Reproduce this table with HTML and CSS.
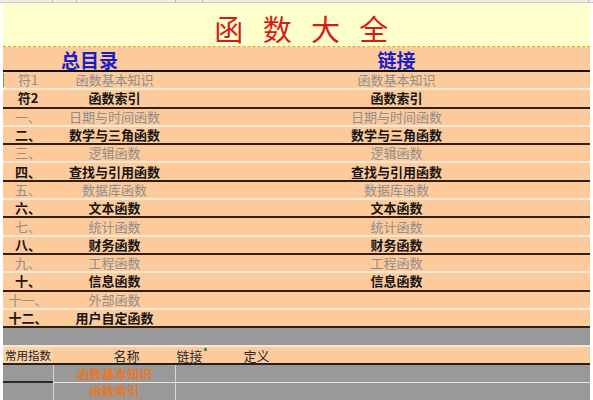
FILE: index.html
```
<!DOCTYPE html>
<html lang="zh">
<head>
<meta charset="utf-8">
<title>函数大全</title>
<link rel="stylesheet" href="styles.css">
</head>
<body>
<div class="colhead">
  <span class="ch w1"></span><span class="ch w2"></span><span class="ch w3"></span><span class="ch w4"></span><span class="ch w5"></span>
</div>
<div class="sheet">
  <div class="title">函 数 大 全</div>
  <div class="head">
    <div class="h-left">总目录</div>
    <div></div>
    <div class="h-right">链接</div>
  </div>
  <div class="rows">
    <div class="row muted first"><span class="num">符1</span><span class="name">函数基本知识</span><span></span><span class="link">函数基本知识</span></div>
    <div class="row bold"><span class="num">符2</span><span class="name">函数索引</span><span></span><span class="link">函数索引</span></div>
    <div class="row muted"><span class="num">一、</span><span class="name">日期与时间函数</span><span></span><span class="link">日期与时间函数</span></div>
    <div class="row bold"><span class="num">二、</span><span class="name">数学与三角函数</span><span></span><span class="link">数学与三角函数</span></div>
    <div class="row muted"><span class="num">三、</span><span class="name">逻辑函数</span><span></span><span class="link">逻辑函数</span></div>
    <div class="row bold"><span class="num">四、</span><span class="name">查找与引用函数</span><span></span><span class="link">查找与引用函数</span></div>
    <div class="row muted"><span class="num">五、</span><span class="name">数据库函数</span><span></span><span class="link">数据库函数</span></div>
    <div class="row bold"><span class="num">六、</span><span class="name">文本函数</span><span></span><span class="link">文本函数</span></div>
    <div class="row muted"><span class="num">七、</span><span class="name">统计函数</span><span></span><span class="link">统计函数</span></div>
    <div class="row bold"><span class="num">八、</span><span class="name">财务函数</span><span></span><span class="link">财务函数</span></div>
    <div class="row muted"><span class="num">九、</span><span class="name">工程函数</span><span></span><span class="link">工程函数</span></div>
    <div class="row bold"><span class="num">十、</span><span class="name">信息函数</span><span></span><span class="link">信息函数</span></div>
    <div class="row muted"><span class="num">十一、</span><span class="name">外部函数</span><span></span><span class="link"></span></div>
    <div class="row bold"><span class="num">十二、</span><span class="name">用户自定函数</span><span></span><span class="link"></span></div>
  </div>
  <div class="grayrow"></div>
  <div class="bhead">
    <span class="b-label">常用指数</span>
    <span></span>
    <span class="b-col">名称</span>
    <span class="b-col b-link">链接<i class="mark"></i></span>
    <span class="b-col">定义</span>
    <span></span>
  </div>
  <div class="bdata b-first">
    <span class="b-a"></span>
    <span class="b-name">函数基本知识</span>
    <span class="b-rest"></span>
  </div>
  <div class="bdata">
    <span class="b-a"></span>
    <span class="b-name">函数索引</span>
    <span class="b-rest"></span>
  </div>
</div>
</body>
</html>
```

FILE: styles.css
```
* { box-sizing: border-box; }
html, body { margin: 0; padding: 0; }
body {
  width: 593px;
  height: 400px;
  overflow: hidden;
  background: #ffffff;
  font-family: "Noto Sans CJK SC", "Liberation Sans", sans-serif;
}
.colhead {
  display: flex;
  height: 3px;
  background: #eeeeee;
  border-bottom: 1px solid #c9c9c9;
}
.ch { height: 100%; border-right: 1px solid #b5b5b5; }
.w1 { width: 53px; }
.w2 { width: 24px; }
.w3 { width: 99px; }
.w4 { width: 27px; }
.w5 { width: 386px; }

.sheet {
  margin-left: 3px;
  width: 587px;
}
.title {
  height: 44px;
  background: #ffffcc;
  border-bottom: 1px dashed #dca440;
  color: #d51a1a;
  font-size: 29px;
  line-height: 1;
  display: flex;
  align-items: center;
  justify-content: center;
  padding-top: 7px;
  padding-left: 15px;
  letter-spacing: 5.4px;
  word-spacing: 2px;
  white-space: pre;
}
.head {
  display: grid;
  grid-template-columns: 173px 27px 1fr;
  height: 25px;
  background: #fdca9b;
  border-bottom: 2px solid #111111;
  align-items: center;
  color: #1c1cc8;
  font-weight: 700;
  font-size: 19px;
  line-height: 1;
}
.h-left, .h-right { text-align: center; padding-top: 1px; }

.row {
  display: grid;
  grid-template-columns: 50px 123px 27px 1fr;
  height: 18.3px;
  background: #fdca9b;
  align-items: center;
  font-size: 13px;
  line-height: 1;
  white-space: nowrap;
}
.row span { text-align: center; padding-bottom: 1px; }
.row.muted { color: #8e8e8e; border-bottom: 2px solid #fbe8d4; }
.row.bold { color: #151515; font-weight: 700; border-bottom: 2px solid #2e1f14; }
.row.first .num { box-shadow: inset 1px 0 0 #5aa36a; }

.grayrow {
  height: 19px;
  background: #999999;
  border-bottom: 2px solid #f2e8dc;
}
.bhead {
  display: grid;
  grid-template-columns: 50px 24px 99px 27px 107px 1fr;
  height: 18px;
  background: #fdca9b;
  border-bottom: 2px solid #262020;
  align-items: center;
  line-height: 1;
  white-space: nowrap;
}
.b-label {
  background: #fdd2a6;
  height: 100%;
  display: flex;
  align-items: center;
  justify-content: center;
  padding-top: 2px;
  font-size: 11.5px;
  color: #1e1e1e;
}
.b-col {
  text-align: center;
  font-size: 13px;
  color: #2a2a2a;
}
.b-link { position: relative; }
.mark {
  position: absolute;
  right: -4px;
  top: -1px;
  width: 3px;
  height: 3px;
  background: #3f9a3f;
}
.bdata {
  display: grid;
  grid-template-columns: 50px 123px 1fr;
  height: 17px;
  background: #999999;
  align-items: stretch;
  line-height: 1;
}
.bdata.b-first { height: 17.5px; }
.b-first .b-a { border-bottom: 2px solid #2e2a28; }
.b-first .b-name, .b-first .b-rest { border-bottom: 1.5px solid #e8e4e0; }
.b-name {
  border-left: 1px solid #d6d6d6;
  border-right: 1px solid #d6d6d6;
  color: #e5782c;
  font-size: 12.5px;
  font-weight: 700;
  display: flex;
  align-items: center;
  justify-content: center;
  padding-top: 1px;
}
```
